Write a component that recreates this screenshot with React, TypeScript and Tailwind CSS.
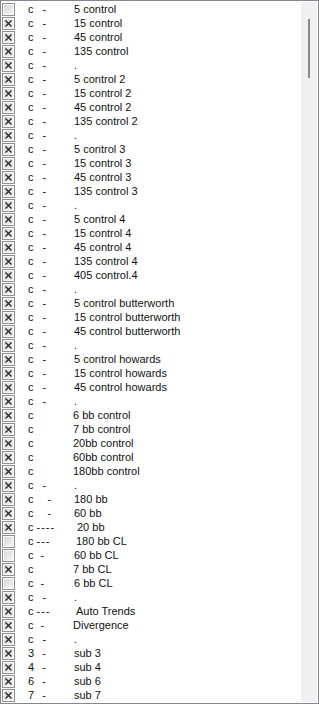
type Row = {
  lead: string
  mid: string
  midCls: string
  label: string
  labelCls: string
  checked: boolean
}

const D = "ml-[9px]" // dash at x=43
const D2 = "ml-[7px]" // dash at x=41
const D3 = "ml-[14px]" // dash at x=48
const L = "pl-[2px]" // label at x=74
const L1 = "pl-[1px]" // label at x=73
const DASHES = "ml-[3px] tracking-[1px]"

const r = (label: string, checked = true, mid = "-", midCls = D, labelCls = L, lead = "c"): Row => ({
  lead,
  mid,
  midCls,
  label,
  labelCls,
  checked,
})

const rows: Row[] = [
  r("5 control", false),
  r("15 control"),
  r("45 control"),
  r("135 control"),
  r("."),
  r("5 control 2"),
  r("15 control 2"),
  r("45 control 2"),
  r("135 control 2"),
  r("."),
  r("5 control 3"),
  r("15 control 3"),
  r("45 control 3"),
  r("135 control 3"),
  r("."),
  r("5 control 4"),
  r("15 control 4"),
  r("45 control 4"),
  r("135 control 4"),
  r("405 control.4"),
  r("."),
  r("5 control butterworth"),
  r("15 control butterworth"),
  r("45 control butterworth"),
  r("."),
  r("5 control howards"),
  r("15 control howards"),
  r("45 control howards"),
  r("."),
  r("6 bb control", true, "", "", L1),
  r("7 bb control", true, "", "", L1),
  r("20bb control", true, "", "", L1),
  r("60bb control", true, "", "", L1),
  r("180bb control", true, "", "", L1),
  r("."),
  r("180 bb", true, "-", D3),
  r("60 bb", true, "-", D3),
  r("20 bb", true, "----", DASHES, "pl-[5px]"),
  r("180 bb CL", false, "---", DASHES, "pl-[4px]"),
  r("60 bb CL", false, "-", D2),
  r("7 bb CL", true, "", "", L1),
  r("6 bb CL", false, "-", D2),
  r("."),
  r("Auto Trends", true, "---", DASHES, "pl-[4px]"),
  r("Divergence", true, "-", D2, L1),
  r("."),
  r("sub 3", true, "-", "ml-[8px]", L, "3"),
  r("sub 4", true, "-", "ml-[8px]", L, "4"),
  r("sub 6", true, "-", "ml-[8px]", L, "6"),
  r("sub 7", true, "-", "ml-[8px]", L, "7"),
]

function Check({ checked }: { checked: boolean }) {
  return (
    <div className="ml-[1px] w-[13px] h-[13px] shrink-0 border border-[#909090] bg-white p-[1px]">
      <div className="w-full h-full bg-gradient-to-br from-[#d8d8d8] to-[#f4f4f4] flex items-center justify-center">
        {checked && (
          <svg width="9" height="9" viewBox="0 0 9 9">
            <path d="M2 2 L7 7 M7 2 L2 7" stroke="#2a2a2a" strokeWidth="1.4" strokeLinecap="square" />
          </svg>
        )}
      </div>
    </div>
  )
}

export default function App() {
  return (
    <div className="w-[319px] h-[704px] border border-[#828790] bg-white flex overflow-hidden font-['Liberation_Sans',Arial,sans-serif] text-[11px] text-[#111]">
      <div className="flex-1 flex flex-col pt-[1px]">
        {rows.map((row, i) => (
          <div key={i} className="h-[14px] flex items-center leading-[14px] whitespace-pre">
            <Check checked={row.checked} />
            <div className="w-[44px] ml-[13px] flex shrink-0">
              <span>{row.lead}</span>
              {row.mid && <span className={row.midCls}>{row.mid}</span>}
            </div>
            <span className={row.labelCls}>{row.label}</span>
          </div>
        ))}
      </div>
      <div className="w-[16px] mt-[1px] mb-[1px] mr-[1px] bg-[#f0f0f0] flex flex-col">
        <div className="ml-[7px] mt-[17px] w-[2px] h-[59px] bg-[#8b8b8b]" />
      </div>
    </div>
  )
}
